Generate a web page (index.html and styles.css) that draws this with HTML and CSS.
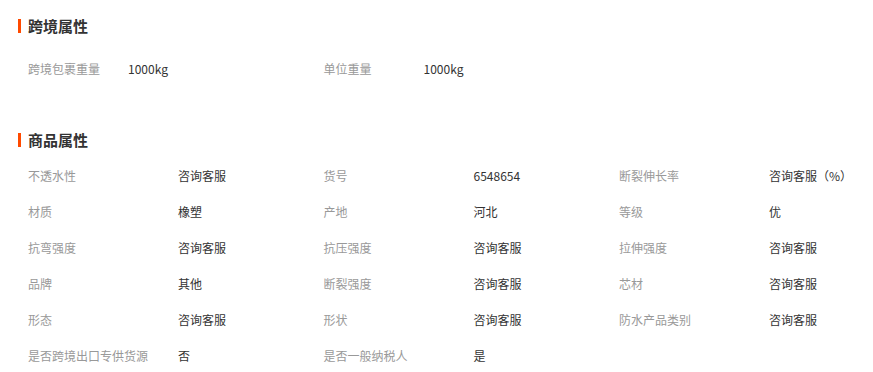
FILE: index.html
```html
<!DOCTYPE html>
<html lang="zh">
<head>
<meta charset="utf-8">
<link rel="stylesheet" href="styles.css">
</head>
<body>
<div class="section first">
  <div class="title">跨境属性</div>
  <div class="grid cross">
    <div class="item"><span class="label">跨境包裹重量</span><span class="value">1000kg</span></div>
    <div class="item"><span class="label">单位重量</span><span class="value">1000kg</span></div>
  </div>
</div>
<div class="section second">
  <div class="title">商品属性</div>
  <div class="grid attrs">
    <div class="item"><span class="label">不透水性</span><span class="value">咨询客服</span></div>
    <div class="item"><span class="label">货号</span><span class="value">6548654</span></div>
    <div class="item"><span class="label">断裂伸长率</span><span class="value">咨询客服（%）</span></div>
    <div class="item"><span class="label">材质</span><span class="value">橡塑</span></div>
    <div class="item"><span class="label">产地</span><span class="value">河北</span></div>
    <div class="item"><span class="label">等级</span><span class="value">优</span></div>
    <div class="item"><span class="label">抗弯强度</span><span class="value">咨询客服</span></div>
    <div class="item"><span class="label">抗压强度</span><span class="value">咨询客服</span></div>
    <div class="item"><span class="label">拉伸强度</span><span class="value">咨询客服</span></div>
    <div class="item"><span class="label">品牌</span><span class="value">其他</span></div>
    <div class="item"><span class="label">断裂强度</span><span class="value">咨询客服</span></div>
    <div class="item"><span class="label">芯材</span><span class="value">咨询客服</span></div>
    <div class="item"><span class="label">形态</span><span class="value">咨询客服</span></div>
    <div class="item"><span class="label">形状</span><span class="value">咨询客服</span></div>
    <div class="item"><span class="label">防水产品类别</span><span class="value">咨询客服</span></div>
    <div class="item"><span class="label">是否跨境出口专供货源</span><span class="value">否</span></div>
    <div class="item"><span class="label">是否一般纳税人</span><span class="value">是</span></div>
  </div>
</div>
</body>
</html>
```
FILE: styles.css
```css
html, body {
  margin: 0;
  padding: 0;
  background: #fff;
}
body {
  font-family: "Noto Sans CJK SC", "Microsoft YaHei", sans-serif;
  font-size: 12px;
  color: #333;
}
.section {
  padding: 0 0 0 18px;
}
.section.first {
  padding-top: 19px;
}
.section.second {
  padding-top: 47px;
}
.title {
  border-left: 3px solid #ff4a00;
  padding-left: 7px;
  font-size: 15px;
  font-weight: bold;
  line-height: 13px;
  height: 14px;
  color: #333;
}
.grid {
  display: grid;
  grid-template-columns: repeat(3, 295.5px);
  padding-left: 10px;
}
.cross {
  margin-top: 17px;
}
.attrs {
  margin-top: 10px;
}
.item {
  display: flex;
  align-items: center;
  height: 36px;
  white-space: nowrap;
}
.label {
  color: #999;
  width: 150px;
  flex: none;
}
.cross .label {
  width: 100px;
}
.value {
  color: #333;
}
```
